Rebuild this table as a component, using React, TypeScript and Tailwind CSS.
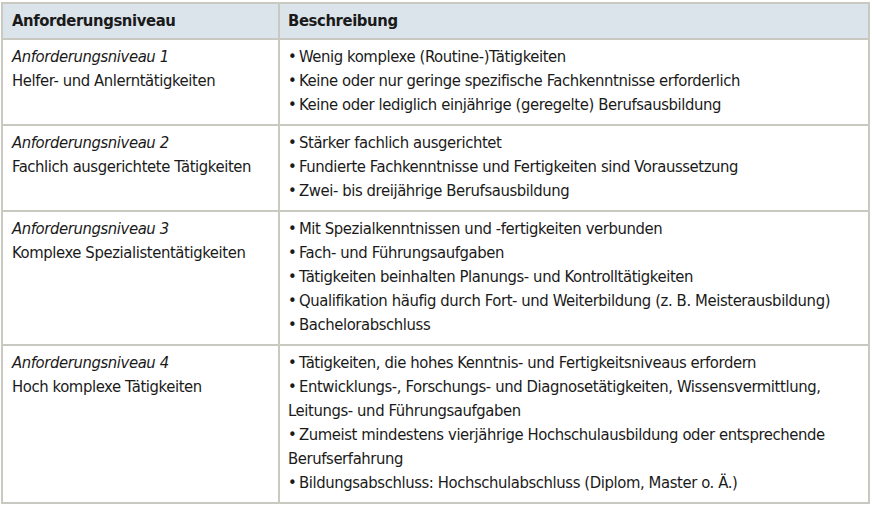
const rows = [
  {
    level: 'Anforderungsniveau 1',
    title: 'Helfer- und Anlerntätigkeiten',
    items: [
      ['Wenig komplexe (Routine-)Tätigkeiten'],
      ['Keine oder nur geringe spezifische Fachkenntnisse erforderlich'],
      ['Keine oder lediglich einjährige (geregelte) Berufsausbildung'],
    ],
  },
  {
    level: 'Anforderungsniveau 2',
    title: 'Fachlich ausgerichtete Tätigkeiten',
    items: [
      ['Stärker fachlich ausgerichtet'],
      ['Fundierte Fachkenntnisse und Fertigkeiten sind Voraussetzung'],
      ['Zwei- bis dreijährige Berufsausbildung'],
    ],
  },
  {
    level: 'Anforderungsniveau 3',
    title: 'Komplexe Spezialistentätigkeiten',
    items: [
      ['Mit Spezialkenntnissen und -fertigkeiten verbunden'],
      ['Fach- und Führungsaufgaben'],
      ['Tätigkeiten beinhalten Planungs- und Kontrolltätigkeiten'],
      ['Qualifikation häufig durch Fort- und Weiterbildung (z. B. Meisterausbildung)'],
      ['Bachelorabschluss'],
    ],
  },
  {
    level: 'Anforderungsniveau 4',
    title: 'Hoch komplexe Tätigkeiten',
    items: [
      ['Tätigkeiten, die hohes Kenntnis- und Fertigkeitsniveaus erfordern'],
      ['Entwicklungs-, Forschungs- und Diagnosetätigkeiten, Wissensvermittlung,', 'Leitungs- und Führungsaufgaben'],
      ['Zumeist mindestens vierjährige Hochschulausbildung oder entsprechende', 'Berufserfahrung'],
      ['Bildungsabschluss: Hochschulabschluss (Diplom, Master o. Ä.)'],
    ],
  },
]

export default function App() {
  return (
    <div
      className="w-[872px] h-[521px] bg-white pl-px pt-[2px] text-[#1a1a1a]"
      style={{ fontFamily: '"DejaVu Sans Condensed", "Liberation Sans Narrow", Roboto, sans-serif' }}
    >
      <div className="w-[869px] border-2 border-[#c9c9c2] text-[16.5px] leading-[24px] tracking-[-0.4px]">
        {/* Header */}
        <div className="grid grid-cols-[277px_1fr] bg-[#dce4eb] border-b-2 border-[#c9c9c2] font-bold">
          <div className="h-[34px] flex items-center pl-[9px] border-r-2 border-[#c9c9c2]">Anforderungsniveau</div>
          <div className="h-[34px] flex items-center pl-[8px]">Beschreibung</div>
        </div>

        {rows.map((row, i) => (
          <div
            key={row.level}
            className={`grid grid-cols-[277px_1fr] ${i < rows.length - 1 ? 'border-b-2 border-[#c9c9c2]' : ''}`}
          >
            <div className="pl-[9px] pt-[5px] pb-[7px] border-r-2 border-[#c9c9c2] whitespace-nowrap">
              <div className="italic">{row.level}</div>
              <div>{row.title}</div>
            </div>
            <div className="pl-[8px] pt-[5px] pb-[7px]">
              {row.items.map((lines) => (
                <div key={lines[0]}>
                  {lines.map((line, j) => (
                    <div key={line} className="whitespace-nowrap">
                      {j === 0 ? '•\u2009' : ''}
                      {line}
                    </div>
                  ))}
                </div>
              ))}
            </div>
          </div>
        ))}
      </div>
    </div>
  )
}
